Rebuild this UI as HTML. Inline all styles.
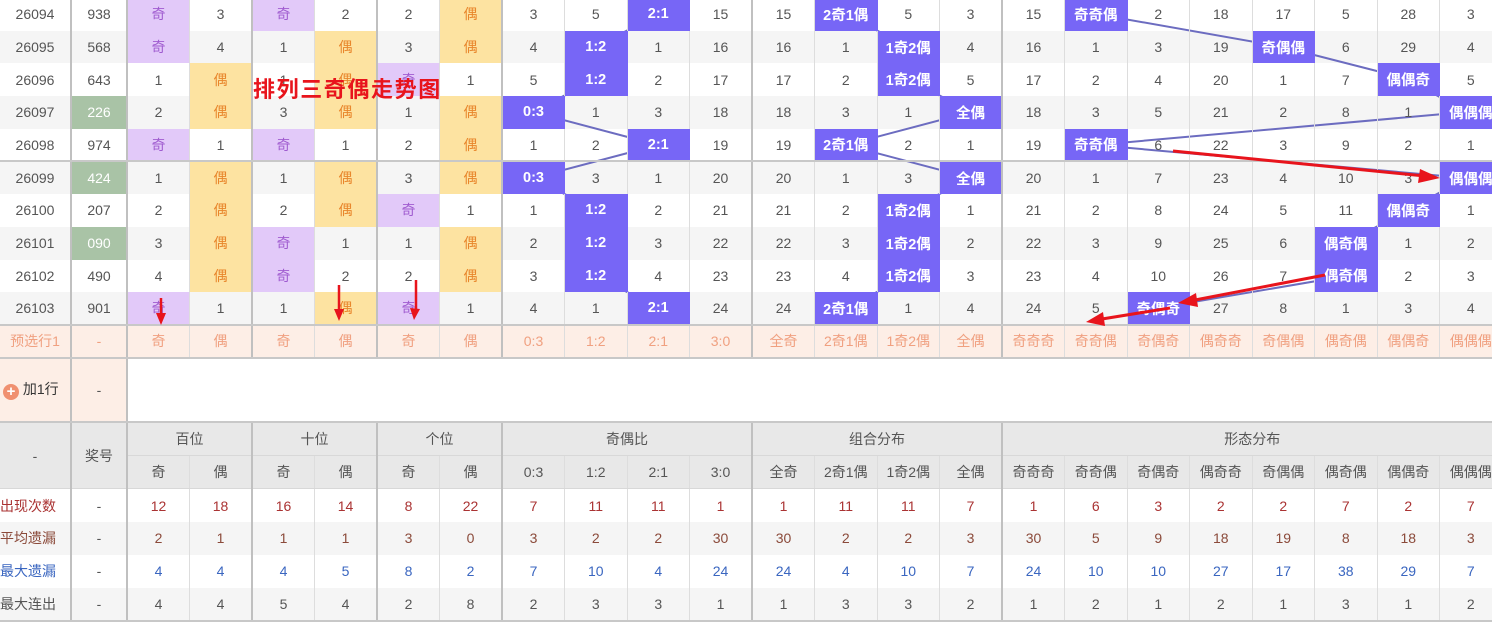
<!DOCTYPE html>
<html><head><meta charset="utf-8">
<style>
*{margin:0;padding:0;box-sizing:border-box}
body{width:1497px;height:624px;overflow:hidden;background:#fff;font-family:"Liberation Sans","Noto Sans CJK SC",sans-serif;position:relative}
#wrap{position:absolute;left:0;top:0;width:1492px;height:624px;overflow:hidden}
.stripe{position:absolute;left:0;width:1497px;height:32.7px;background:#f5f5f5}
svg{position:absolute;left:0;top:0}
table{position:absolute;left:0;top:-2px;border-collapse:collapse;table-layout:fixed;width:1502px}
td{text-align:center;font-size:14px;color:#555;border-right:1px solid #ddd;padding:0;white-space:nowrap;overflow:hidden}
tr.d td{height:32.7px}
.P{background:#e2c9f9;color:#a05cd0}
.O{background:#fde3a1;color:#e8852a}
.G{background:#a9c3a6;color:#fff}
.B{background:#7766f6;color:#fff;font-weight:bold;font-size:14.5px;border-right-color:#7766f6}
tr.pre td{height:33px;background:#fdeee6;color:#f0a080;border-top:2px solid #c8c8c8;border-bottom:2px solid #c8c8c8}
tr.add td{height:64px}
tr.h td{background:#e8e8e8;height:33.5px;border-bottom:1px solid #d8d8d8}
tr.s td{height:33px}
.r1 td{color:#a33}
.r2 td{color:#8b4a3a}
.r3 td{color:#3a66c0}
.r4 td{color:#555}
col.g{border-right:2px solid #c0c0c0}
#title{position:absolute;left:253px;top:72px;font-size:22px;font-weight:bold;color:#e8141c;letter-spacing:1.6px;font-family:"Liberation Sans","Noto Sans CJK SC",sans-serif}
</style></head><body>
<div id="wrap">
<div class="stripe" style="top:30.7px"></div>
<div class="stripe" style="top:96.1px"></div>
<div class="stripe" style="top:161.5px"></div>
<div class="stripe" style="top:226.9px"></div>
<div class="stripe" style="top:292.3px"></div>
<svg width="1497" height="330" stroke="#6c6cc0" stroke-width="2" fill="none">
<polyline points="658,14 596,47 596,79 533,112 658,145 533,178 596,210 596,243 596,276 658,308"/>
<polyline points="846,14 908,47 908,79 971,112 846,145 971,178 908,210 908,243 908,276 846,308"/>
<polyline points="1096,14 1283,47 1408,79 1466,112 1096,145 1466,178 1408,210 1346,243 1346,276 1158,308"/>
</svg>
<table>
<colgroup><col class="g" style="width:71px"><col class="g" style="width:56px"><col style="width:62.5px"><col class="g" style="width:62.5px"><col style="width:62.5px"><col class="g" style="width:62.5px"><col style="width:62.5px"><col class="g" style="width:62.5px"><col style="width:62.5px"><col style="width:62.5px"><col style="width:62.5px"><col class="g" style="width:62.5px"><col style="width:62.5px"><col style="width:62.5px"><col style="width:62.5px"><col class="g" style="width:62.5px"><col style="width:62.5px"><col style="width:62.5px"><col style="width:62.5px"><col style="width:62.5px"><col style="width:62.5px"><col style="width:62.5px"><col style="width:62.5px"><col style="width:62.5px"></colgroup>
<tr class="d"><td>26094</td><td>938</td><td class="P">奇</td><td>3</td><td class="P">奇</td><td>2</td><td>2</td><td class="O">偶</td><td>3</td><td>5</td><td class="B">2:1</td><td>15</td><td>15</td><td class="B">2奇1偶</td><td>5</td><td>3</td><td>15</td><td class="B">奇奇偶</td><td>2</td><td>18</td><td>17</td><td>5</td><td>28</td><td>3</td></tr>
<tr class="d"><td>26095</td><td>568</td><td class="P">奇</td><td>4</td><td>1</td><td class="O">偶</td><td>3</td><td class="O">偶</td><td>4</td><td class="B">1:2</td><td>1</td><td>16</td><td>16</td><td>1</td><td class="B">1奇2偶</td><td>4</td><td>16</td><td>1</td><td>3</td><td>19</td><td class="B">奇偶偶</td><td>6</td><td>29</td><td>4</td></tr>
<tr class="d"><td>26096</td><td>643</td><td>1</td><td class="O">偶</td><td>1</td><td class="O">偶</td><td class="P">奇</td><td>1</td><td>5</td><td class="B">1:2</td><td>2</td><td>17</td><td>17</td><td>2</td><td class="B">1奇2偶</td><td>5</td><td>17</td><td>2</td><td>4</td><td>20</td><td>1</td><td>7</td><td class="B">偶偶奇</td><td>5</td></tr>
<tr class="d"><td>26097</td><td class="G">226</td><td>2</td><td class="O">偶</td><td>3</td><td class="O">偶</td><td>1</td><td class="O">偶</td><td class="B">0:3</td><td>1</td><td>3</td><td>18</td><td>18</td><td>3</td><td>1</td><td class="B">全偶</td><td>18</td><td>3</td><td>5</td><td>21</td><td>2</td><td>8</td><td>1</td><td class="B">偶偶偶</td></tr>
<tr class="d"><td>26098</td><td>974</td><td class="P">奇</td><td>1</td><td class="P">奇</td><td>1</td><td>2</td><td class="O">偶</td><td>1</td><td>2</td><td class="B">2:1</td><td>19</td><td>19</td><td class="B">2奇1偶</td><td>2</td><td>1</td><td>19</td><td class="B">奇奇偶</td><td>6</td><td>22</td><td>3</td><td>9</td><td>2</td><td>1</td></tr>
<tr class="d" style="border-top:2px solid #c8c8c8"><td>26099</td><td class="G">424</td><td>1</td><td class="O">偶</td><td>1</td><td class="O">偶</td><td>3</td><td class="O">偶</td><td class="B">0:3</td><td>3</td><td>1</td><td>20</td><td>20</td><td>1</td><td>3</td><td class="B">全偶</td><td>20</td><td>1</td><td>7</td><td>23</td><td>4</td><td>10</td><td>3</td><td class="B">偶偶偶</td></tr>
<tr class="d"><td>26100</td><td>207</td><td>2</td><td class="O">偶</td><td>2</td><td class="O">偶</td><td class="P">奇</td><td>1</td><td>1</td><td class="B">1:2</td><td>2</td><td>21</td><td>21</td><td>2</td><td class="B">1奇2偶</td><td>1</td><td>21</td><td>2</td><td>8</td><td>24</td><td>5</td><td>11</td><td class="B">偶偶奇</td><td>1</td></tr>
<tr class="d"><td>26101</td><td class="G">090</td><td>3</td><td class="O">偶</td><td class="P">奇</td><td>1</td><td>1</td><td class="O">偶</td><td>2</td><td class="B">1:2</td><td>3</td><td>22</td><td>22</td><td>3</td><td class="B">1奇2偶</td><td>2</td><td>22</td><td>3</td><td>9</td><td>25</td><td>6</td><td class="B">偶奇偶</td><td>1</td><td>2</td></tr>
<tr class="d"><td>26102</td><td>490</td><td>4</td><td class="O">偶</td><td class="P">奇</td><td>2</td><td>2</td><td class="O">偶</td><td>3</td><td class="B">1:2</td><td>4</td><td>23</td><td>23</td><td>4</td><td class="B">1奇2偶</td><td>3</td><td>23</td><td>4</td><td>10</td><td>26</td><td>7</td><td class="B">偶奇偶</td><td>2</td><td>3</td></tr>
<tr class="d"><td>26103</td><td>901</td><td class="P">奇</td><td>1</td><td>1</td><td class="O">偶</td><td class="P">奇</td><td>1</td><td>4</td><td>1</td><td class="B">2:1</td><td>24</td><td>24</td><td class="B">2奇1偶</td><td>1</td><td>4</td><td>24</td><td>5</td><td class="B">奇偶奇</td><td>27</td><td>8</td><td>1</td><td>3</td><td>4</td></tr>
<tr class="pre"><td>预选行1</td><td>-</td><td>奇</td><td>偶</td><td>奇</td><td>偶</td><td>奇</td><td>偶</td><td>0:3</td><td>1:2</td><td>2:1</td><td>3:0</td><td>全奇</td><td>2奇1偶</td><td>1奇2偶</td><td>全偶</td><td>奇奇奇</td><td>奇奇偶</td><td>奇偶奇</td><td>偶奇奇</td><td>奇偶偶</td><td>偶奇偶</td><td>偶偶奇</td><td>偶偶偶</td></tr>
<tr class="add"><td style="background:#fdeee6;color:#333;text-align:left;padding-left:3px"><span style="display:inline-block;width:16px;height:16px;border-radius:50%;background:#f09070;color:#fff;font-weight:bold;font-size:15px;line-height:16px;text-align:center;vertical-align:-2px">+</span> 加1行</td><td style="background:#fdeee6">-</td><td colspan="22" style="border-right:none"></td></tr>
<tr class="h" style="border-top:2px solid #c8c8c8"><td rowspan="2">-</td><td rowspan="2">奖号</td><td colspan="2">百位</td><td colspan="2">十位</td><td colspan="2">个位</td><td colspan="4">奇偶比</td><td colspan="4">组合分布</td><td colspan="8">形态分布</td></tr>
<tr class="h"><td>奇</td><td>偶</td><td>奇</td><td>偶</td><td>奇</td><td>偶</td><td>0:3</td><td>1:2</td><td>2:1</td><td>3:0</td><td>全奇</td><td>2奇1偶</td><td>1奇2偶</td><td>全偶</td><td>奇奇奇</td><td>奇奇偶</td><td>奇偶奇</td><td>偶奇奇</td><td>奇偶偶</td><td>偶奇偶</td><td>偶偶奇</td><td>偶偶偶</td></tr>
<tr class="s r1"><td style="text-align:left">出现次数</td><td style="color:#555">-</td><td>12</td><td>18</td><td>16</td><td>14</td><td>8</td><td>22</td><td>7</td><td>11</td><td>11</td><td>1</td><td>1</td><td>11</td><td>11</td><td>7</td><td>1</td><td>6</td><td>3</td><td>2</td><td>2</td><td>7</td><td>2</td><td>7</td></tr>
<tr class="s r2" style="background:#f5f5f5"><td style="text-align:left">平均遗漏</td><td style="color:#555">-</td><td>2</td><td>1</td><td>1</td><td>1</td><td>3</td><td>0</td><td>3</td><td>2</td><td>2</td><td>30</td><td>30</td><td>2</td><td>2</td><td>3</td><td>30</td><td>5</td><td>9</td><td>18</td><td>19</td><td>8</td><td>18</td><td>3</td></tr>
<tr class="s r3"><td style="text-align:left">最大遗漏</td><td style="color:#555">-</td><td>4</td><td>4</td><td>4</td><td>5</td><td>8</td><td>2</td><td>7</td><td>10</td><td>4</td><td>24</td><td>24</td><td>4</td><td>10</td><td>7</td><td>24</td><td>10</td><td>10</td><td>27</td><td>17</td><td>38</td><td>29</td><td>7</td></tr>
<tr class="s r4" style="background:#f5f5f5;border-bottom:2px solid #c8c8c8"><td style="text-align:left">最大连出</td><td>-</td><td>4</td><td>4</td><td>5</td><td>4</td><td>2</td><td>8</td><td>2</td><td>3</td><td>3</td><td>1</td><td>1</td><td>3</td><td>3</td><td>2</td><td>1</td><td>2</td><td>1</td><td>2</td><td>1</td><td>3</td><td>1</td><td>2</td></tr>
</table>
<div id="title">排列三奇偶走势图</div>
<svg width="1497" height="340" stroke="#e8141c" fill="#e8141c">
<line x1="1173" y1="151" x2="1425" y2="176" stroke-width="3"/>
<polygon points="1440,178 1420,169 1418,183" stroke="none"/>
<line x1="1325" y1="275" x2="1195" y2="300" stroke-width="3"/>
<polygon points="1178,303 1196,293 1198,307" stroke="none"/>
<line x1="1170" y1="308" x2="1102" y2="319" stroke-width="3"/>
<polygon points="1086,322 1103,312 1105,326" stroke="none"/>
<line x1="161" y1="298" x2="161" y2="316" stroke-width="2.5"/>
<polygon points="161,325 156,313 166,313" stroke="none"/>
<line x1="339" y1="285" x2="339" y2="312" stroke-width="2.5"/>
<polygon points="339,321 334,309 344,309" stroke="none"/>
<line x1="416" y1="280" x2="416" y2="311" stroke-width="2.5"/>
<polygon points="414,320 410,308 420,309" stroke="none"/>
</svg>
</div>
</body></html>
